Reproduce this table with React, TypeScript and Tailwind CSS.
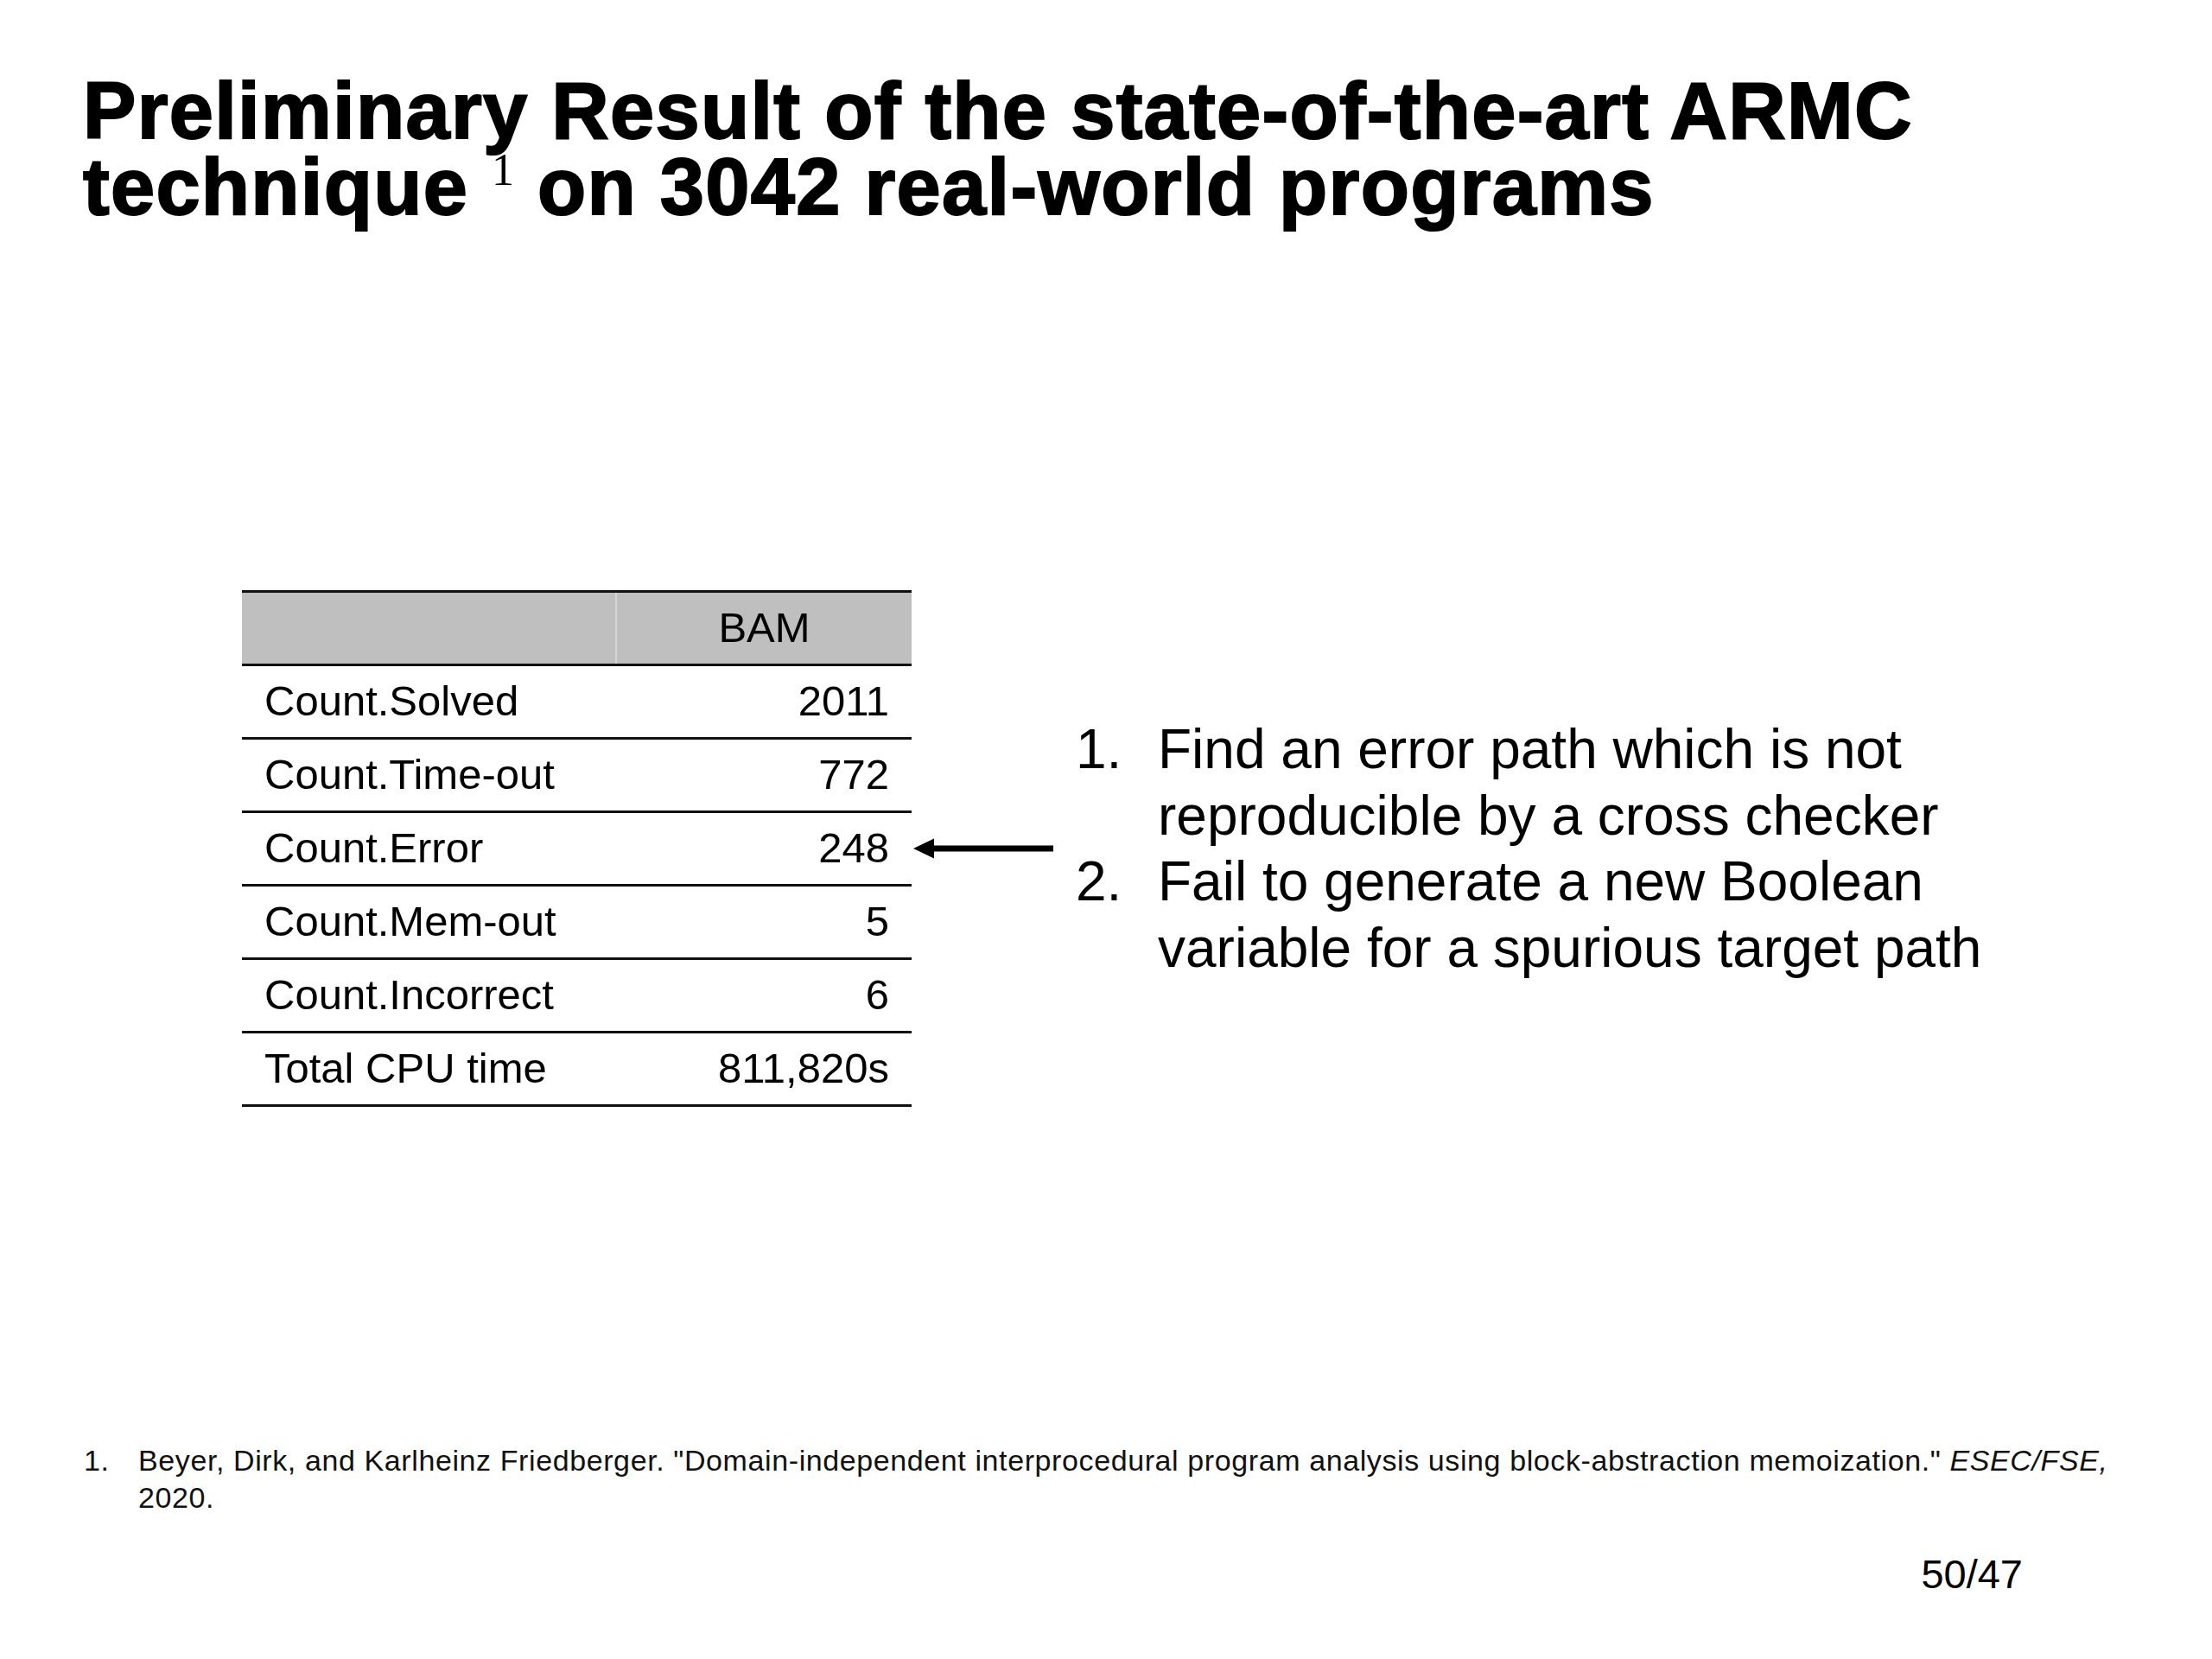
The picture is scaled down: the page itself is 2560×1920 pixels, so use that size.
import React from "react";

const rows: [string, string][] = [
  ["Count.Solved", "2011"],
  ["Count.Time-out", "772"],
  ["Count.Error", "248"],
  ["Count.Mem-out", "5"],
  ["Count.Incorrect", "6"],
  ["Total CPU time", "811,820s"],
];

function Arrow() {
  return (
    <svg width="162" height="24" viewBox="0 0 162 24" className="ml-[2px] shrink-0">
      <polygon points="0,12 24,0.5 24,23.5" fill="#000" />
      <rect x="20" y="8.5" width="142" height="7" fill="#000" />
    </svg>
  );
}

export default function App() {
  return (
    <div className="w-[2560px] h-[1920px] bg-white text-black flex flex-col font-['Liberation_Sans',Arial,Helvetica,sans-serif]">
      <h1 className="pl-[96px] pt-[84px] text-[92px] leading-[88px] font-bold tracking-[1.3px] [-webkit-text-stroke:2px_#000]">
        Preliminary Result of the state-of-the-art ARMC
        <br />
        technique{" "}
        <sup className="top-[-34px] text-[52px] font-normal tracking-normal [-webkit-text-stroke:0] font-['Liberation_Serif','Times_New_Roman',serif]">
          1
        </sup>{" "}
        on 3042 real-world programs
      </h1>

      <div className="mt-[423px] pl-[280px] flex items-center">
        <div className="w-[775px] shrink-0 border-t-[3px] border-[#111] text-[49px]">
          <div className="flex h-[85px] bg-[#bfbfbf] border-b-[3px] border-b-[#111]">
            <div className="w-[434px] border-r-2 border-r-[#d6d6d6]" />
            <div className="flex-1 flex items-center justify-center">BAM</div>
          </div>
          {rows.map(([label, value]) => (
            <div
              key={label}
              className="flex h-[85px] items-center justify-between px-[26px] border-b-[3px] border-b-[#111]"
            >
              <span>{label}</span>
              <span>{value}</span>
            </div>
          ))}
        </div>

        <Arrow />

        <ol className="ml-[26px] text-[64px] leading-[76.5px]">
          <li className="flex">
            <span className="w-[95px] shrink-0">1.</span>
            <span>
              Find an error path which is not
              <br />
              reproducible by a cross checker
            </span>
          </li>
          <li className="flex">
            <span className="w-[95px] shrink-0">2.</span>
            <span>
              Fail to generate a new Boolean
              <br />
              variable for a spurious target path
            </span>
          </li>
        </ol>
      </div>

      <div className="mt-[388px] pl-[97px] flex text-[34px] leading-[43px] tracking-[0.6px] text-[#111]">
        <span className="w-[63px] shrink-0">1.</span>
        <span>
          Beyer, Dirk, and Karlheinz Friedberger. "Domain-independent interprocedural program analysis using
          block-abstraction memoization." <i>ESEC/FSE,</i>
          <br />
          2020.
        </span>
      </div>

      <div className="mt-[39px] flex justify-end pr-[219px] text-[47px] leading-[56px]">50/47</div>
    </div>
  );
}
